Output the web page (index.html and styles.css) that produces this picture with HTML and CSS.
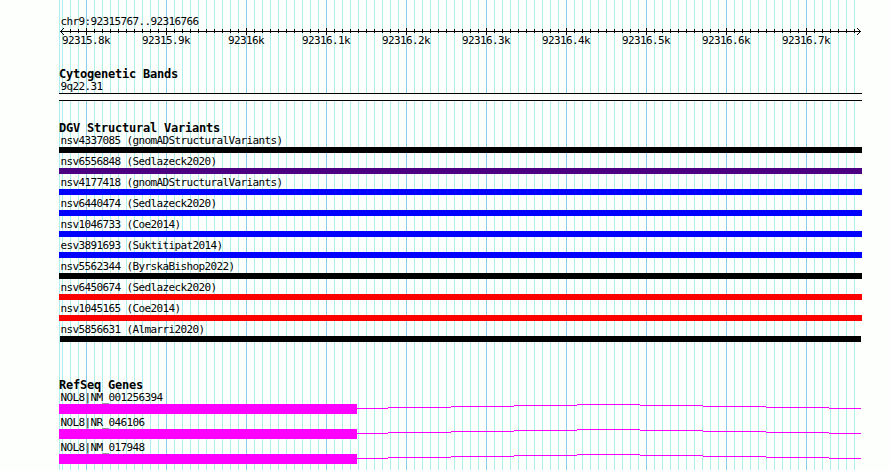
FILE: index.html
```html
<!DOCTYPE html>
<html lang="en">
<head>
    <meta charset="UTF-8">
    <meta name="viewport" content="width=device-width, initial-scale=1.0">
    <title>chr9:92315767..92316766</title>
    <link rel="stylesheet" href="styles.css">
</head>
<body>
    <div class="panel">
        <div class="ruler">
            <div class="label">chr9:92315767..92316766</div>
            <svg class="axis" width="803" height="7" shape-rendering="crispEdges">
                <defs>
                    <pattern id="minor" x="3" y="0" width="8" height="7" patternUnits="userSpaceOnUse">
                        <rect x="0" y="1" width="1" height="4"/>
                    </pattern>
                    <pattern id="major" x="27" y="0" width="80" height="7" patternUnits="userSpaceOnUse">
                        <rect x="0" y="0" width="1" height="7"/>
                    </pattern>
                </defs>
                <rect x="10" y="0" width="786" height="7" fill="url(#minor)"/>
                <rect x="10" y="0" width="786" height="7" fill="url(#major)"/>
                <rect x="1" y="3" width="801" height="1"/>
                <!-- arrow heads -->
                <path d="M2 2h1v1h-1z M3 1h1v1h-1z M4 0h1v1h-1z M2 4h1v1h-1z M3 5h1v1h-1z M4 6h1v1h-1z"/>
                <path d="M800 2h1v1h-1z M799 1h1v1h-1z M798 0h1v1h-1z M800 4h1v1h-1z M799 5h1v1h-1z M798 6h1v1h-1z"/>
            </svg>
            <div class="ticks">
                <span>92315.8k</span>
                <span>92315.9k</span>
                <span>92316k</span>
                <span>92316.1k</span>
                <span>92316.2k</span>
                <span>92316.3k</span>
                <span>92316.4k</span>
                <span>92316.5k</span>
                <span>92316.6k</span>
                <span>92316.7k</span>
            </div>
        </div>

        <div class="track cytoband">
            <h2>Cytogenetic Bands</h2>
            <div class="label">9q22.31</div>
            <div class="band"></div>
        </div>

        <div class="track variants">
            <h2>DGV Structural Variants</h2>
            <div class="variant">
                <div class="label">nsv4337085 (gnomADStructuralVariants)</div>
                <div class="bar black"></div>
            </div>
            <div class="variant">
                <div class="label">nsv6556848 (Sedlazeck2020)</div>
                <div class="bar indigo"></div>
            </div>
            <div class="variant">
                <div class="label">nsv4177418 (gnomADStructuralVariants)</div>
                <div class="bar blue"></div>
            </div>
            <div class="variant">
                <div class="label">nsv6440474 (Sedlazeck2020)</div>
                <div class="bar blue"></div>
            </div>
            <div class="variant">
                <div class="label">nsv1046733 (Coe2014)</div>
                <div class="bar blue"></div>
            </div>
            <div class="variant">
                <div class="label">esv3891693 (Suktitipat2014)</div>
                <div class="bar blue"></div>
            </div>
            <div class="variant">
                <div class="label">nsv5562344 (ByrskaBishop2022)</div>
                <div class="bar black"></div>
            </div>
            <div class="variant">
                <div class="label">nsv6450674 (Sedlazeck2020)</div>
                <div class="bar red"></div>
            </div>
            <div class="variant">
                <div class="label">nsv1045165 (Coe2014)</div>
                <div class="bar red"></div>
            </div>
            <div class="variant">
                <div class="label">nsv5856631 (Almarri2020)</div>
                <div class="bar black inset"></div>
            </div>
        </div>

        <div class="track genes">
            <h2>RefSeq Genes</h2>
            <div class="gene">
                <div class="label">NOL8|NM_001256394</div>
                <div class="model">
                    <div class="exon"></div>
                    <svg class="intron" width="504" height="10" shape-rendering="crispEdges">
                        <path id="hat" d="M0 4h31v1H0z M31 3h63v1h-63z M94 2h63v1h-63z M157 1h63v1h-63z M220 0h63v1h-63z M283 1h63v1h-63z M346 2h63v1h-63z M409 3h63v1h-63z M472 4h32v1h-32z"/>
                    </svg>
                </div>
            </div>
            <div class="gene">
                <div class="label">NOL8|NR_046106</div>
                <div class="model">
                    <div class="exon"></div>
                    <svg class="intron" width="504" height="10" shape-rendering="crispEdges"><use href="#hat"/></svg>
                </div>
            </div>
            <div class="gene">
                <div class="label">NOL8|NM_017948</div>
                <div class="model">
                    <div class="exon"></div>
                    <svg class="intron" width="504" height="10" shape-rendering="crispEdges"><use href="#hat"/></svg>
                </div>
            </div>
        </div>
    </div>
</body>
</html>
```

FILE: styles.css
```css
body {
    margin: 0;
    background-color: #fdfffc;
    color: #000;
    font-family: 'DejaVu Sans Mono', 'Liberation Mono', monospace;
    font-size: 11px;
    line-height: 13px;
    overflow: hidden;
}

/* Grid lines: left edge, every 100 bases, every 10 bases */
.panel {
    box-sizing: border-box;
    width: 803px;
    height: 470px;
    margin-left: 59px;
    padding-top: 15px;
    background-image:
        linear-gradient(to right, #afeeee 1px, transparent 1px),
        linear-gradient(to right, #87ceeb 1px, transparent 1px),
        linear-gradient(to right, #afeeee 1px, transparent 1px);
    background-size: 803px 100%, 80px 100%, 8px 100%;
    background-position: 0 0, 27px 0, 3px 0;
    background-repeat: no-repeat, repeat-x, repeat-x;
}

.label {
    height: 13px;
    padding-left: 1.5px;
    letter-spacing: -0.623px;
    white-space: pre;
}

h2 {
    height: 12px;
    margin: 0;
    font-size: 12px;
    font-weight: bold;
    line-height: 12px;
    letter-spacing: -0.225px;
}

/* Ruler */
.ruler {
    height: 53px;
}

.axis {
    display: block;
}

.ticks {
    display: flex;
    margin: -1px 0 0 -13px;
    letter-spacing: -0.623px;
}

.ticks span {
    flex: 0 0 80px;
    text-align: center;
}

/* Tracks */
.cytoband {
    height: 54px;
}

.band {
    height: 6px;
    background-color: #fdfffc;
    border-top: 1px solid #000;
    border-bottom: 1px solid #000;
}

.variants {
    height: 257px;
}

.variant {
    height: 21px;
}

.bar {
    height: 6px;
}

.bar.inset {
    margin: 0 1px;
}

.black {
    background-color: #000;
}

.indigo {
    background-color: #4b0082;
}

.blue {
    background-color: #00f;
}

.red {
    background-color: #f00;
}

.gene {
    height: 25px;
}

.model {
    display: flex;
}

.exon {
    width: 298px;
    height: 10px;
    background-color: #f0f;
}

.intron {
    display: block;
    fill: #f0f;
}
```
